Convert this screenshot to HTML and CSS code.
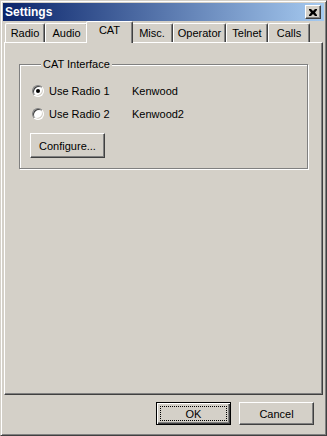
FILE: index.html
```html
<!DOCTYPE html>
<html lang="en">
<head>
  <meta charset="UTF-8">
  <meta name="viewport" content="width=device-width, initial-scale=1.0">
  <title>Settings</title>

  <link rel="stylesheet" href="styles.css">
</head>
<body>
  <div class="window">
    <div class="titlebar">
      <span class="title">Settings</span>
      <button class="close" type="button" aria-label="Close">
        <svg width="8" height="7" viewBox="0 0 8 7">
          <path d="M0 0h2l2 2 2-2h2v1L6 3.5 8 6v1H6L4 5 2 7H0V6l2-2.5L0 1z" fill="#000"/>
        </svg>
      </button>
    </div>

    <div class="tabs">
      <div class="tab tab-radio">Radio</div>
      <div class="tab tab-audio">Audio</div>
      <div class="tab tab-cat active">CAT</div>
      <div class="tab tab-misc">Misc.</div>
      <div class="tab tab-operator">Operator</div>
      <div class="tab tab-telnet">Telnet</div>
      <div class="tab tab-calls">Calls</div>
    </div>

    <div class="panel">
      <fieldset class="group">
        <legend>CAT Interface</legend>

        <div class="choices">
          <label class="choice">
            <span class="radio checked"></span>
            Use Radio 1
          </label>
          <span class="rig">Kenwood</span>

          <label class="choice">
            <span class="radio"></span>
            Use Radio 2
          </label>
          <span class="rig">Kenwood2</span>
        </div>

        <button class="btn configure" type="button">Configure...</button>
      </fieldset>
    </div>

    <div class="footer">
      <button class="btn default" type="button">OK</button>
      <button class="btn" type="button">Cancel</button>
    </div>
  </div>
</body>
</html>
```

FILE: styles.css
```css
* {
  box-sizing: border-box;
}

body {
  margin: 0;
  font-family: 'Liberation Sans', Arial, sans-serif;
  font-size: 11px;
  color: #000;
  background: #d4d0c8;
}

.window {
  display: flex;
  flex-direction: column;
  width: 327px;
  height: 436px;
  padding: 2px;

  background: #d4d0c8;
  border: 1px solid;
  border-color: #d4d0c8 #404040 #404040 #d4d0c8;
  box-shadow: inset 1px 1px 0 #fff, inset -1px -1px 0 #808080;
}

/* title bar */

.titlebar {
  display: flex;
  align-items: center;
  justify-content: space-between;
  height: 18px;
  padding: 0 2px 0 2px;

  background: linear-gradient(90deg, #0a246a, #a6caf0);
}

.title {
  color: #fff;
  font-weight: bold;
  font-size: 12px;
}

.close {
  display: flex;
  align-items: center;
  justify-content: center;
  width: 16px;
  height: 14px;
  padding: 0;
  margin-right: 1px;

  background: #d4d0c8;
  border: 1px solid;
  border-color: #fff #404040 #404040 #fff;
  box-shadow: inset -1px -1px 0 #808080;
}

/* tabs */

.tabs {
  display: flex;
  align-items: flex-end;
  height: 21px;
  padding-left: 2px;
}

.tab {
  height: 19px;
  line-height: 19px;
  text-align: center;

  border: 1px solid;
  border-bottom: 0;
  border-color: #fff #404040 transparent #fff;
  border-radius: 2px 2px 0 0;
  box-shadow: inset -1px 0 0 #808080;
}

.tab.active {
  position: relative;
  z-index: 1;
  height: 22px;
  line-height: 17px;
  margin: 0 -2px -1px;

  background: #d4d0c8;
}

.tab-radio { width: 40px; }
.tab-audio { width: 43px; }
.tab-misc { width: 42px; }
.tab-operator { width: 53px; }
.tab-telnet { width: 42px; }
.tab-calls { width: 42px; }

.tab.tab-cat { width: 47px; }

/* panel */

.panel {
  flex: 1;
  margin: 0 1px;
  padding: 15px 14px 0;

  border: 1px solid;
  border-color: #fff #404040 #404040 #fff;
  box-shadow: inset -1px -1px 0 #808080;
}

.group {
  margin: 0;
  height: 111px;
  padding: 0 0 0 12px;

  border: 1px solid #808080;
  box-shadow: inset 1px 1px 0 #fff, 1px 1px 0 #fff;
}

.group legend {
  margin-left: 9px;
  padding: 0 2px;
  line-height: 13px;
  background: #d4d0c8;
}

.choices {
  display: grid;
  grid-template-columns: 100px auto;
  grid-auto-rows: 23px;
  align-items: center;
  margin-top: 8px;
}

.choice {
  display: flex;
  align-items: center;
  gap: 5px;
}

.radio {
  position: relative;
  width: 12px;
  height: 12px;

  background: #fff;
  border-radius: 50%;
  border: 1px solid;
  border-color: #808080 #fff #fff #808080;
  box-shadow: inset 1px 1px 0 #404040, inset -1px -1px 0 #d4d0c8;
}

.radio.checked:after {
  content: '';
  position: absolute;
  left: 3px;
  top: 3px;
  width: 4px;
  height: 4px;
  border-radius: 50%;
  background: #000;
}

/* buttons */

.btn {
  width: 75px;
  height: 23px;
  padding: 0;

  font: inherit;
  color: #000;
  background: #d4d0c8;
  border: 1px solid;
  border-color: #fff #404040 #404040 #fff;
  box-shadow: inset -1px -1px 0 #808080;
}

.btn.configure {
  height: 25px;
  margin-top: 8px;
  margin-left: -2px;
}

.btn.default {
  border-color: #000;
  box-shadow: inset 1px 1px 0 #fff, inset -1px -1px 0 #404040, inset -2px -2px 0 #808080;
  outline: 1px dotted #000;
  outline-offset: -5px;
}

.footer {
  display: flex;
  justify-content: flex-end;
  gap: 8px;
  height: 38px;
  padding: 7px 10px 0 0;
}
```
